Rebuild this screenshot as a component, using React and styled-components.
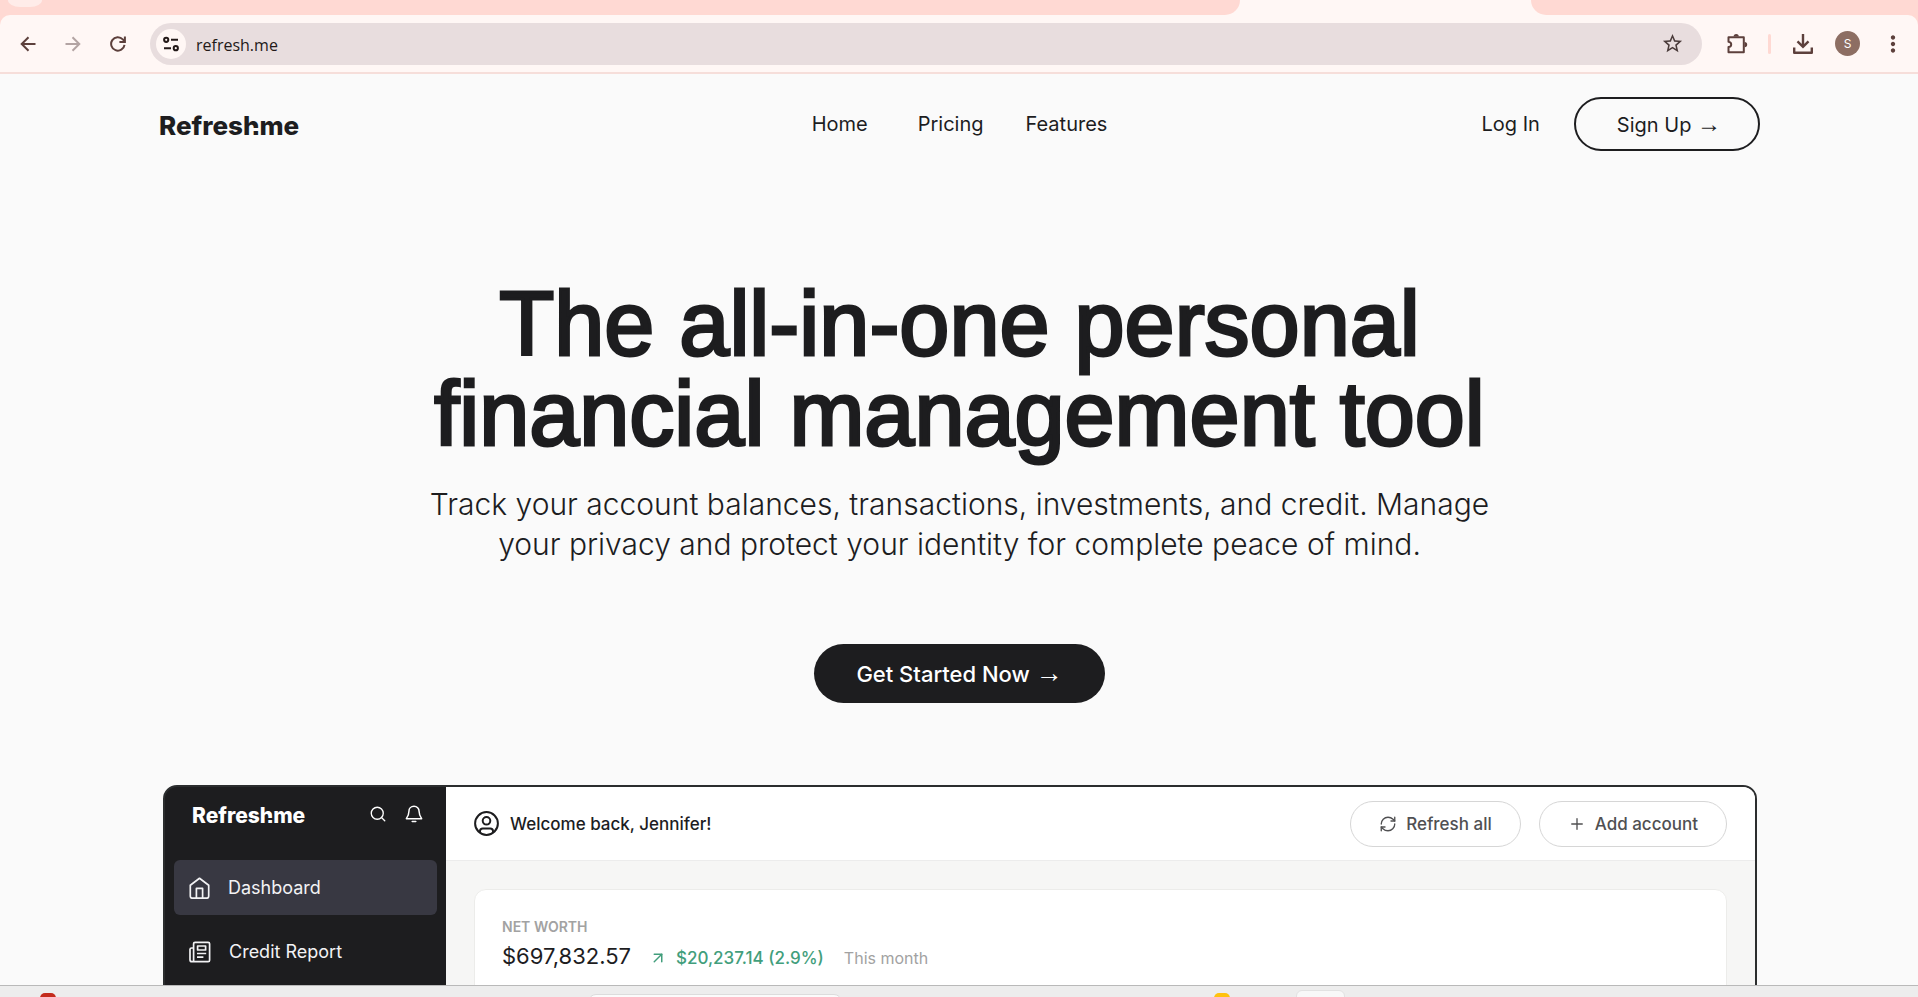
import React, { useState } from "react";
import styled, { createGlobalStyle } from "styled-components";
import { MdStarBorder, MdMoreVert } from "react-icons/md";
import { Search, RefreshCw, Plus, ArrowUpRight } from "lucide-react";

const BackIcon = () => (
  <svg width="16" height="16" viewBox="0 0 16 16" fill="none" stroke="currentColor" strokeWidth="2">
    <path d="M15.5 8H2M8.5 1.2L1.7 8l6.8 6.8" />
  </svg>
);

const ForwardIcon = () => (
  <svg width="16" height="16" viewBox="0 0 16 16" fill="none" stroke="currentColor" strokeWidth="2">
    <path d="M.5 8H14M7.5 1.2L14.3 8l-6.8 6.8" />
  </svg>
);

const ReloadIcon = () => (
  <svg width="16" height="16" viewBox="0 0 16 16" fill="none" stroke="currentColor" strokeWidth="2">
    <path d="M14.5 8.8A6.7 6.7 0 1 1 12.8 3.4L14.6 5.3" />
    <path d="M14.9 .4v5.5H9.4" />
  </svg>
);

const SiteInfoIcon = () => (
  <svg width="16" height="16" viewBox="0 0 16 16" fill="none" stroke="currentColor" strokeWidth="2">
    <circle cx="3.2" cy="3.8" r="2.1" />
    <path d="M8 3.8h7M1 12.2h7" />
    <circle cx="12.8" cy="12.2" r="2.1" />
  </svg>
);

const ExtensionIcon = () => (
  <svg width="22" height="22" viewBox="0 0 22 22">
    <path
      d="M3.5 4.3h14.3v15H2.5v-5.2c3.6-.3 3.6-5 0-5.4V4.3z"
      fill="none"
      stroke="currentColor"
      strokeWidth="2"
      strokeLinejoin="round"
    />
    <path d="M7.6 3.6a2.6 2.6 0 0 1 5.2 0zM18.6 9a2.6 2.6 0 0 1 0 5.2z" fill="currentColor" />
  </svg>
);

const DownloadIcon = () => (
  <svg width="22" height="22" viewBox="0 0 22 22" fill="none" stroke="currentColor" strokeWidth="2.4">
    <path d="M11 1v12.5M5.5 8.4L11 13.9l5.5-5.5" />
    <path d="M2.2 14.5v5.3h17.6v-5.3" strokeLinejoin="round" />
  </svg>
);

const BellIcon = () => (
  <svg width="18" height="18" viewBox="0 0 24 24" fill="none" stroke="currentColor" strokeWidth="2" strokeLinejoin="round">
    <path d="M12 1.8c-4 0-6.8 2.9-6.8 6.8 0 4.7-1.3 6.6-3.4 9.6h20.4c-2.1-3-3.4-4.9-3.4-9.6 0-3.9-2.8-6.8-6.8-6.8z" />
    <path d="M9.6 22h4.8" strokeLinecap="round" />
  </svg>
);

const HomeIcon = () => (
  <svg width="21" height="22" viewBox="0 0 21 22" fill="none" stroke="currentColor" strokeWidth="1.7" strokeLinejoin="round">
    <path d="M1.3 8.3L10.5 1.3l9.2 7v10.9a2 2 0 0 1-2 2H3.3a2 2 0 0 1-2-2z" />
    <path d="M7.4 21.2v-9.8h6.2v9.8" />
  </svg>
);

const ReportIcon = () => (
  <svg width="22" height="22" viewBox="0 0 22 22" fill="none" stroke="currentColor" strokeWidth="1.7" strokeLinejoin="round">
    <path d="M4.6 20.7V2.8a1.5 1.5 0 0 1 1.5-1.5h13a1.5 1.5 0 0 1 1.5 1.5v16.4a1.5 1.5 0 0 1-1.5 1.5H3a2 2 0 0 1-2-2V8.4A1.5 1.5 0 0 1 2.5 7h2" />
    <path d="M8.6 5h8v4h-8zM8 12.5h9.2M8 16.2h6.4" />
  </svg>
);

const UserIcon = () => (
  <svg width="25" height="25" viewBox="0 0 25 25" fill="none" stroke="currentColor" strokeWidth="2">
    <circle cx="12.5" cy="12.5" r="11.4" />
    <circle cx="12.5" cy="9.8" r="3.8" />
    <path d="M6 21.5v-1.4c0-1.6 1.3-2.6 2.8-2.6h7.4c1.5 0 2.8 1 2.8 2.6v1.4" />
  </svg>
);

const Logo = ({ small }) => (
  <LogoText $small={small}>
    Refres<LogoH $small={small}>h</LogoH>me
  </LogoText>
);

const App = () => {
  const [address, setAddress] = useState("refresh.me");

  const submitHandler = (event) => {
    event.preventDefault();
  };

  return (
    <Window>
      <GlobalStyle />
      <TabStrip>
        <TabsBefore>
          <TabSearch aria-label="Search tabs" />
        </TabsBefore>
        <ActiveTab />
        <TabsAfter />
      </TabStrip>
      <ToolbarWrap>
        <Toolbar>
          <IconButton aria-label="Back">
            <BackIcon />
          </IconButton>
          <IconButton aria-label="Forward" $muted>
            <ForwardIcon />
          </IconButton>
          <IconButton aria-label="Reload">
            <ReloadIcon />
          </IconButton>
          <AddressBar onSubmit={submitHandler}>
            <SiteInfo type="button" aria-label="Site information">
              <SiteInfoIcon />
            </SiteInfo>
            <AddressInput
              type="text"
              aria-label="Address"
              value={address}
              onChange={(event) => setAddress(event.target.value)}
            />
            <StarButton type="button" aria-label="Bookmark">
              <MdStarBorder size={23} />
            </StarButton>
          </AddressBar>
          <IconButton aria-label="Extensions">
            <ExtensionIcon />
          </IconButton>
          <Divider />
          <IconButton aria-label="Downloads">
            <DownloadIcon />
          </IconButton>
          <IconButton aria-label="Profile">
            <Avatar>S</Avatar>
          </IconButton>
          <IconButton aria-label="Menu">
            <MdMoreVert size={26} />
          </IconButton>
        </Toolbar>
      </ToolbarWrap>

      <Page>
        <Container>
          <Header>
            <Logo />
            <Nav>
              <NavLink href="#home">Home</NavLink>
              <NavLink href="#pricing">Pricing</NavLink>
              <NavLink href="#features">Features</NavLink>
            </Nav>
            <Account>
              <NavLink href="#login">Log In</NavLink>
              <SignUp>
                Sign Up <Arrow>→</Arrow>
              </SignUp>
            </Account>
          </Header>

          <Hero>
            <Title>
              The all-in-one personal
              <br />
              financial management tool
            </Title>
            <Subtitle>
              Track your account balances, transactions, investments, and credit. Manage your privacy
              and protect your identity for complete peace of mind.
            </Subtitle>
            <GetStarted>
              Get Started Now <Arrow $large>→</Arrow>
            </GetStarted>
          </Hero>

          <Preview>
            <Sidebar>
              <SidebarTop>
                <Logo small />
                <SidebarTools>
                  <Search size={18} strokeWidth={1.8} />
                  <BellIcon />
                </SidebarTools>
              </SidebarTop>
              <Menu>
                <MenuItem href="#dashboard" $active>
                  <HomeIcon />
                  Dashboard
                </MenuItem>
                <MenuItem href="#credit">
                  <ReportIcon />
                  Credit Report
                </MenuItem>
              </Menu>
            </Sidebar>
            <Main>
              <MainHeader>
                <Welcome>
                  <UserIcon />
                  Welcome back, Jennifer!
                </Welcome>
                <Actions>
                  <ActionButton>
                    <RefreshCw size={18} strokeWidth={1.8} />
                    Refresh all
                  </ActionButton>
                  <ActionButton>
                    <Plus size={18} strokeWidth={1.8} />
                    Add account
                  </ActionButton>
                </Actions>
              </MainHeader>
              <MainBody>
                <Card>
                  <CardLabel>NET WORTH</CardLabel>
                  <WorthRow>
                    <Worth>$697,832.57</Worth>
                    <Gain>
                      <ArrowUpRight size={18} strokeWidth={2} />
                      $20,237.14 (2.9%)
                    </Gain>
                    <Period>This month</Period>
                  </WorthRow>
                </Card>
              </MainBody>
            </Main>
          </Preview>
        </Container>
      </Page>

      <Taskbar>
        <TaskSlot>
          <TaskDot $color="#c42b1c" $left={40} />
        </TaskSlot>
        <TaskSlot>
          <TaskSearch aria-label="Search" />
        </TaskSlot>
        <TaskSlot>
          <TaskDot $color="#ffc20e" $left={0} />
          <TaskButton aria-label="Open app" />
        </TaskSlot>
      </Taskbar>
    </Window>
  );
};

const GlobalStyle = createGlobalStyle`
  * {
    box-sizing: border-box;
  }

  body {
    margin: 0;
    font-family: Inter, "Liberation Sans", sans-serif;
    color: #1d1d1f;
  }

  button,
  input {
    margin: 0;
    padding: 0;
    border: none;
    background: none;
    font: inherit;
    color: inherit;
  }

  button {
    cursor: pointer;
  }

  a {
    color: inherit;
    text-decoration: none;
  }
`;

const Window = styled.div`
  display: flex;
  flex-direction: column;
  height: 100vh;
  overflow: hidden;
  background-color: #fafafa;
`;

const TabStrip = styled.div`
  display: flex;
  flex: none;
  height: 15px;
  background-color: #fff7f5;
`;

const TabsBefore = styled.div`
  flex: 1240;
  background-color: #ffd9d3;
  border-bottom-right-radius: 15px;
`;

const TabSearch = styled.button`
  display: block;
  width: 34px;
  height: 7px;
  margin-left: 8px;
  background-color: #ffece9;
  border-radius: 0 0 12px 12px / 0 0 7px 7px;
`;

const ActiveTab = styled.div`
  flex: 291;
`;

const TabsAfter = styled.div`
  flex: 387;
  background-color: #ffd9d3;
  border-bottom-left-radius: 15px;
`;

const ToolbarWrap = styled.div`
  flex: none;
  background-color: #ffd9d3;
`;

const Toolbar = styled.div`
  display: flex;
  align-items: center;
  height: 59px;
  padding: 0 3px 0 5px;
  background-color: #fff7f5;
  border-bottom: 2px solid #f6deda;
  border-radius: 10px 10px 0 0;
`;

const IconButton = styled.button`
  display: flex;
  align-items: center;
  justify-content: center;
  width: 45px;
  height: 42px;
  color: ${(props) => (props.$muted ? "#b3a4a3" : "#5d403c")};
`;

const AddressBar = styled.form`
  display: flex;
  flex: 1;
  align-items: center;
  height: 42px;
  margin: 0 12px 0 10px;
  padding: 0 18px 0 6px;
  background-color: #e8ddde;
  border-radius: 21px;
`;

const SiteInfo = styled.button`
  display: flex;
  align-items: center;
  justify-content: center;
  width: 30px;
  height: 30px;
  color: #231918;
  background-color: #fff7f5;
  border-radius: 50%;
`;

const AddressInput = styled.input`
  flex: 1;
  margin-left: 10px;
  padding-top: 2px;
  font-family: "Open Sans", sans-serif;
  font-size: 16px;
  line-height: 24px;
  color: #231918;
  outline: none;
`;

const StarButton = styled.button`
  display: flex;
  color: #4a3b3a;
`;

const Divider = styled.span`
  width: 3px;
  height: 20px;
  margin: 0 9px;
  background-color: #ffd9d3;
  border-radius: 2px;
`;

const Avatar = styled.span`
  display: flex;
  align-items: center;
  justify-content: center;
  width: 25px;
  height: 25px;
  font-size: 12px;
  color: #fff;
  background-color: #8d6e63;
  border-radius: 50%;
`;

const Page = styled.div`
  flex: 1;
  min-height: 0;
  overflow: hidden;
`;

const Container = styled.div`
  max-width: 1602px;
  margin: 0 auto;
  padding-left: 1px;
`;

const Header = styled.header`
  display: grid;
  grid-template-columns: 1fr auto 1fr;
  align-items: center;
  padding-top: 23px;
`;

const LogoText = styled.div`
  font-size: ${(props) => (props.$small ? "21px" : "26px")};
  font-weight: 800;
  line-height: ${(props) => (props.$small ? "26px" : "32px")};
  padding-top: 4px;
`;

/* the right leg of the h is cut through, leaving a dot at its foot */
const LogoH = styled.span`
  position: relative;

  &::after {
    content: "";
    position: absolute;
    right: 0;
    bottom: ${(props) => (props.$small ? "8px" : "10px")};
    width: 50%;
    height: ${(props) => (props.$small ? "2px" : "3px")};
    background-color: ${(props) => (props.$small ? "#1d1d1f" : "#fafafa")};
  }
`;

const Nav = styled.nav`
  display: flex;
  gap: 42px;
`;

const NavLink = styled.a`
  font-size: 20px;
  line-height: 24px;

  ${Nav} &:first-child {
    margin-right: 8px;
  }
`;

const Account = styled.div`
  display: flex;
  align-items: center;
  justify-content: flex-end;
  gap: 34px;
`;

const Arrow = styled.span`
  font-family: "Liberation Serif", serif;
  font-size: ${(props) => (props.$large ? "27px" : "24px")};
  font-weight: 400;
  line-height: 1;
`;

const SignUp = styled.button`
  height: 54px;
  padding: 0 37px 0 41px;
  font-size: 20px;
  line-height: 24px;
  border: 2px solid #1d1d1f;
  border-radius: 27px;
`;

const Hero = styled.section`
  display: flex;
  flex-direction: column;
  align-items: center;
  padding: 128px 0 82px;
  text-align: center;
`;

const Title = styled.h1`
  margin: 0;
  font-family: "Liberation Sans", sans-serif;
  font-size: 90px;
  font-weight: 400;
  font-variant-ligatures: none;
  line-height: 90px;
  -webkit-text-stroke: 3px #1d1d1f;
`;

const Subtitle = styled.p`
  max-width: 1080px;
  margin: 25px 0 80px;
  font-size: 30px;
  font-weight: 300;
  line-height: 40px;
`;

const GetStarted = styled.button`
  height: 59px;
  padding: 0 42px;
  font-size: 22px;
  font-weight: 500;
  line-height: 27px;
  color: #fff;
  background-color: #1d1d1f;
  border-radius: 30px;
`;

const Preview = styled.section`
  display: flex;
  height: 800px;
  margin: 0 3px 0 4px;
  overflow: hidden;
  background-color: #1d1d1f;
  border: 2px solid #2b2d2e;
  border-radius: 14px;
`;

const Sidebar = styled.aside`
  flex: none;
  width: 281px;
  color: #fff;
`;

const SidebarTop = styled.div`
  display: flex;
  align-items: center;
  justify-content: space-between;
  height: 54px;
  margin-bottom: 19px;
  padding: 0 23px 0 27px;
`;

const SidebarTools = styled.div`
  display: flex;
  gap: 18px;
`;

const Menu = styled.nav`
  display: flex;
  flex-direction: column;
  gap: 9px;
  padding: 0 9px;
`;

const MenuItem = styled.a`
  display: flex;
  align-items: center;
  gap: 18px;
  height: 55px;
  padding-left: 15px;
  font-size: 18px;
  color: #f2f2f4;
  background-color: ${(props) => (props.$active ? "#383842" : "transparent")};
  border-radius: 6px;
`;

const Main = styled.div`
  display: flex;
  flex: 1;
  flex-direction: column;
  background-color: #f6f6f5;
`;

const MainHeader = styled.div`
  display: flex;
  align-items: center;
  justify-content: space-between;
  height: 74px;
  padding: 0 28px;
  background-color: #fff;
  border-bottom: 1px solid #ececec;
`;

const Welcome = styled.div`
  display: flex;
  align-items: center;
  gap: 11px;
  font-size: 17px;
  font-weight: 500;
`;

const Actions = styled.div`
  display: flex;
  gap: 18px;
`;

const ActionButton = styled.button`
  display: flex;
  align-items: center;
  gap: 9px;
  height: 46px;
  padding: 0 28px;
  font-size: 17px;
  font-weight: 500;
  color: #505052;
  border: 1px solid #d6d6d6;
  border-radius: 23px;
`;

const MainBody = styled.div`
  display: flex;
  flex: 1;
  padding: 28px 28px 0;
`;

const Card = styled.div`
  flex: 1;
  padding: 27px;
  background-color: #fff;
  border: 1px solid #ececea;
  border-radius: 12px;
`;

const CardLabel = styled.div`
  font-size: 14px;
  font-weight: 600;
  line-height: 20px;
  color: #a2a2a2;
`;

const WorthRow = styled.div`
  display: flex;
  align-items: baseline;
  margin-top: 4px;
  line-height: 30px;
`;

const Worth = styled.span`
  font-size: 22px;
`;

const Gain = styled.span`
  display: flex;
  align-items: baseline;
  gap: 9px;
  margin: 0 20px 0 18px;
  font-size: 17px;
  font-weight: 500;
  color: #429e7c;

  svg {
    align-self: center;
  }
`;

const Period = styled.span`
  font-size: 16px;
  color: #a2a2a2;
`;

const Taskbar = styled.footer`
  display: grid;
  flex: none;
  grid-template-columns: 588fr 626fr 704fr;
  height: 12px;
  overflow: hidden;
  background-color: #ededed;
  border-top: 1px solid #b9b9b9;
`;

const TaskSlot = styled.div`
  display: flex;
  align-items: flex-start;
`;

const TaskDot = styled.span`
  width: 16px;
  height: 16px;
  margin: 7px 0 0 ${(props) => props.$left}px;
  background-color: ${(props) => props.$color};
  border-radius: 5px;
`;

const TaskSearch = styled.button`
  width: 254px;
  height: 30px;
  margin-top: 8px;
  background-color: #fbfbfb;
  border: 1px solid #dcdcdc;
  border-radius: 8px;
`;

const TaskButton = styled.button`
  width: 49px;
  height: 40px;
  margin: 4px 0 0 66px;
  background-color: #f8f8f8;
  border: 1px solid #e2e2e2;
  border-radius: 6px;
`;

export default App;
